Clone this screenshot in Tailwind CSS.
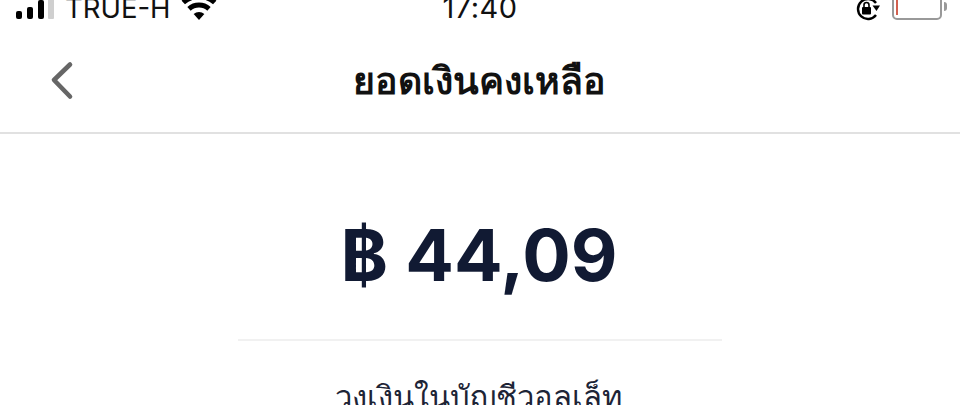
<!DOCTYPE html>
<html lang="th">
  <head>
    <meta charset="UTF-8" />
    <meta name="viewport" content="width=device-width, initial-scale=1.0" />
    <title>ยอดเงินคงเหลือ</title>
    <script src="https://cdn.jsdelivr.net/npm/@tailwindcss/browser@4"></script>
  </head>
  <body class="bg-white font-['Inter','Noto_Sans',sans-serif]">
    <div class="h-[405px] w-[960px] overflow-hidden bg-white">
      <!-- Status bar -->
      <div class="grid h-[22px] grid-cols-[1fr_auto_1fr] grid-rows-[22px] items-end text-[#111]">
        <div class="flex h-[22px] items-end pl-[16px]">
          <svg width="39" height="20" viewBox="0 0 39 20" class="mb-[3px] shrink-0" fill="#000">
            <rect x="0" y="12" width="6" height="8" rx="2" />
            <rect x="11" y="8" width="6" height="12" rx="2" />
            <rect x="22" y="1" width="6" height="19" rx="2" />
            <rect x="32" y="0" width="6" height="20" rx="1" fill="#cfcfcf" />
          </svg>
          <span class="mb-[-2px] ml-[10px] text-[27.5px] leading-[32px] font-normal">TRUE-H</span>
          <svg width="36" height="28" viewBox="-18 -28 36 28" class="mb-[2px] ml-[10px] shrink-0" fill="none">
            <path d="M-15.7 -17.5 A23.5 23.5 0 0 1 15.7 -17.5" stroke="#000" stroke-width="5" />
            <path d="M-10 -11.1 A15 15 0 0 1 10 -11.1" stroke="#000" stroke-width="5" />
            <path d="M0 0 L-5.35 -5.94 A8 8 0 0 1 5.35 -5.94 Z" fill="#000" />
          </svg>
        </div>
        <span class="mb-[-2px] text-[29px] leading-[32px] tracking-[0.5px]">17:40</span>
        <div class="flex h-[22px] items-end justify-end pr-[13px]">
          <svg width="26" height="24" viewBox="0 0 26 24" fill="none" class="mb-[1px] shrink-0">
            <path d="M21 6 A10 10 0 1 0 21 18" stroke="#000" stroke-width="2.4" />
            <path d="M17.5 8.5 L25 8.5 L21.5 14 Z" fill="#000" />
            <rect x="7" y="10" width="9" height="7.5" rx="1" fill="#000" />
            <path d="M9 10 V8 a2.5 2.5 0 0 1 5 0 V10" stroke="#000" stroke-width="1.6" />
          </svg>
          <div class="mb-[2px] ml-[11px] flex h-[30px] w-[50px] shrink-0 items-end rounded-[5px] border-2 border-[#999] pb-[3px] pl-[2px]">
            <div class="h-[18px] w-[2px] bg-[#d2604f]"></div>
          </div>
          <div class="mb-[11px] ml-[2px] h-[9px] w-[3px] shrink-0 rounded-r-sm bg-[#999]"></div>
        </div>
      </div>

      <!-- Header -->
      <header class="grid h-[112px] grid-cols-[1fr_auto_1fr] items-center border-b-2 border-[#e1e1e1]">
        <svg width="26" height="40" viewBox="0 0 26 40" class="mt-[6px] ml-[49px]" fill="none">
          <path d="M21 4.5 L5 20 L21 36.5" stroke="#666" stroke-width="4.6" stroke-linecap="round" stroke-linejoin="round" />
        </svg>
        <h1 class="mt-[8px] mr-[2px] text-[37.5px] leading-[44px] font-bold text-[#111]">ยอดเงินคงเหลือ</h1>
      </header>

      <!-- Balance -->
      <main class="flex flex-col items-center">
        <p class="mt-[79px] pr-[2px] text-[72px] leading-[84px] font-bold text-[#111a33]">฿ 44,09</p>
        <div class="mt-[42px] h-[2px] w-[484px] bg-[#f1f1f1]"></div>
        <p class="mt-[34px] pr-[4px] text-[31px] leading-[44px] text-[#1d2436]">วงเงินในบัญชีวอลเล็ท</p>
      </main>
    </div>
  </body>
</html>
